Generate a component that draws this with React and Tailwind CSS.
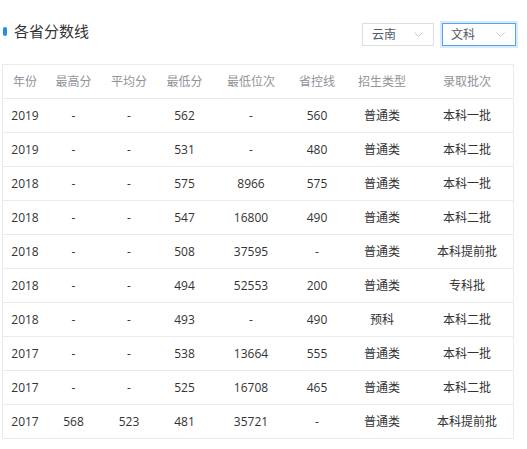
import React from "react";

const rows = [
  ["2019", "-", "-", "562", "-", "560", "普通类", "本科一批"],
  ["2019", "-", "-", "531", "-", "480", "普通类", "本科二批"],
  ["2018", "-", "-", "575", "8966", "575", "普通类", "本科一批"],
  ["2018", "-", "-", "547", "16800", "490", "普通类", "本科二批"],
  ["2018", "-", "-", "508", "37595", "-", "普通类", "本科提前批"],
  ["2018", "-", "-", "494", "52553", "200", "普通类", "专科批"],
  ["2018", "-", "-", "493", "-", "490", "预科", "本科二批"],
  ["2017", "-", "-", "538", "13664", "555", "普通类", "本科一批"],
  ["2017", "-", "-", "525", "16708", "465", "普通类", "本科二批"],
  ["2017", "568", "523", "481", "35721", "-", "普通类", "本科提前批"],
];

const heads = ["年份", "最高分", "平均分", "最低分", "最低位次", "省控线", "招生类型", "录取批次"];

function Chevron() {
  return (
    <svg width="9" height="5" viewBox="0 0 9 5" className="ml-auto">
      <polyline points="0.5,0.5 4.5,4.5 8.5,0.5" fill="none" stroke="#c5c8ce" strokeWidth="1" />
    </svg>
  );
}

function Select({ label, active }) {
  return (
    <div
      className={
        active
          ? "flex items-center w-[74px] h-[23px] pl-[8px] pr-[10px] border border-[#57a3f3] shadow-[0_0_0_2px_rgba(45,140,240,0.18)] bg-white text-[12px] text-[#515a6e]"
          : "flex items-center w-[72px] h-[23px] pl-[9px] pr-[10px] border border-[#dcdee2] bg-white text-[12px] text-[#515a6e]"
      }
    >
      <span>{label}</span>
      <Chevron />
    </div>
  );
}

function Row({ cells, head }) {
  return (
    <div className="grid grid-cols-[44px_53px_58px_53px_80px_52px_78px_92px] h-[34px] border-b border-[#e8eaec]">
      {cells.map((c, i) => (
        <div
          key={i}
          className={
            head
              ? "flex items-center justify-center text-[12px] text-[#909399]"
              : "flex items-center justify-center text-[12px] text-[#333]"
          }
        >
          {c}
        </div>
      ))}
    </div>
  );
}

export default function App() {
  return (
    <div className="w-[527px] h-[449px] bg-white font-['Open_Sans','Noto_Sans_CJK_SC',sans-serif]">
      <div className="flex items-start h-[46px]">
        <div className="flex items-center ml-[3px] pt-[22px]">
          <div className="w-[4px] h-[9px] rounded-full bg-[#1e90e6]" />
          <div className="ml-[7px] text-[15px] leading-[18px] text-[#333]">各省分数线</div>
        </div>
        <div className="flex items-center gap-[8px] ml-auto mr-[11px] pt-[23px]">
          <Select label="云南" />
          <Select label="文科" active />
        </div>
      </div>
      <div className="mt-[18px] ml-[2px] w-[512px] border-l border-r border-t border-[#e8eaec]">
        <Row cells={heads} head />
        {rows.map((r, i) => (
          <Row key={i} cells={r} />
        ))}
      </div>
    </div>
  );
}
